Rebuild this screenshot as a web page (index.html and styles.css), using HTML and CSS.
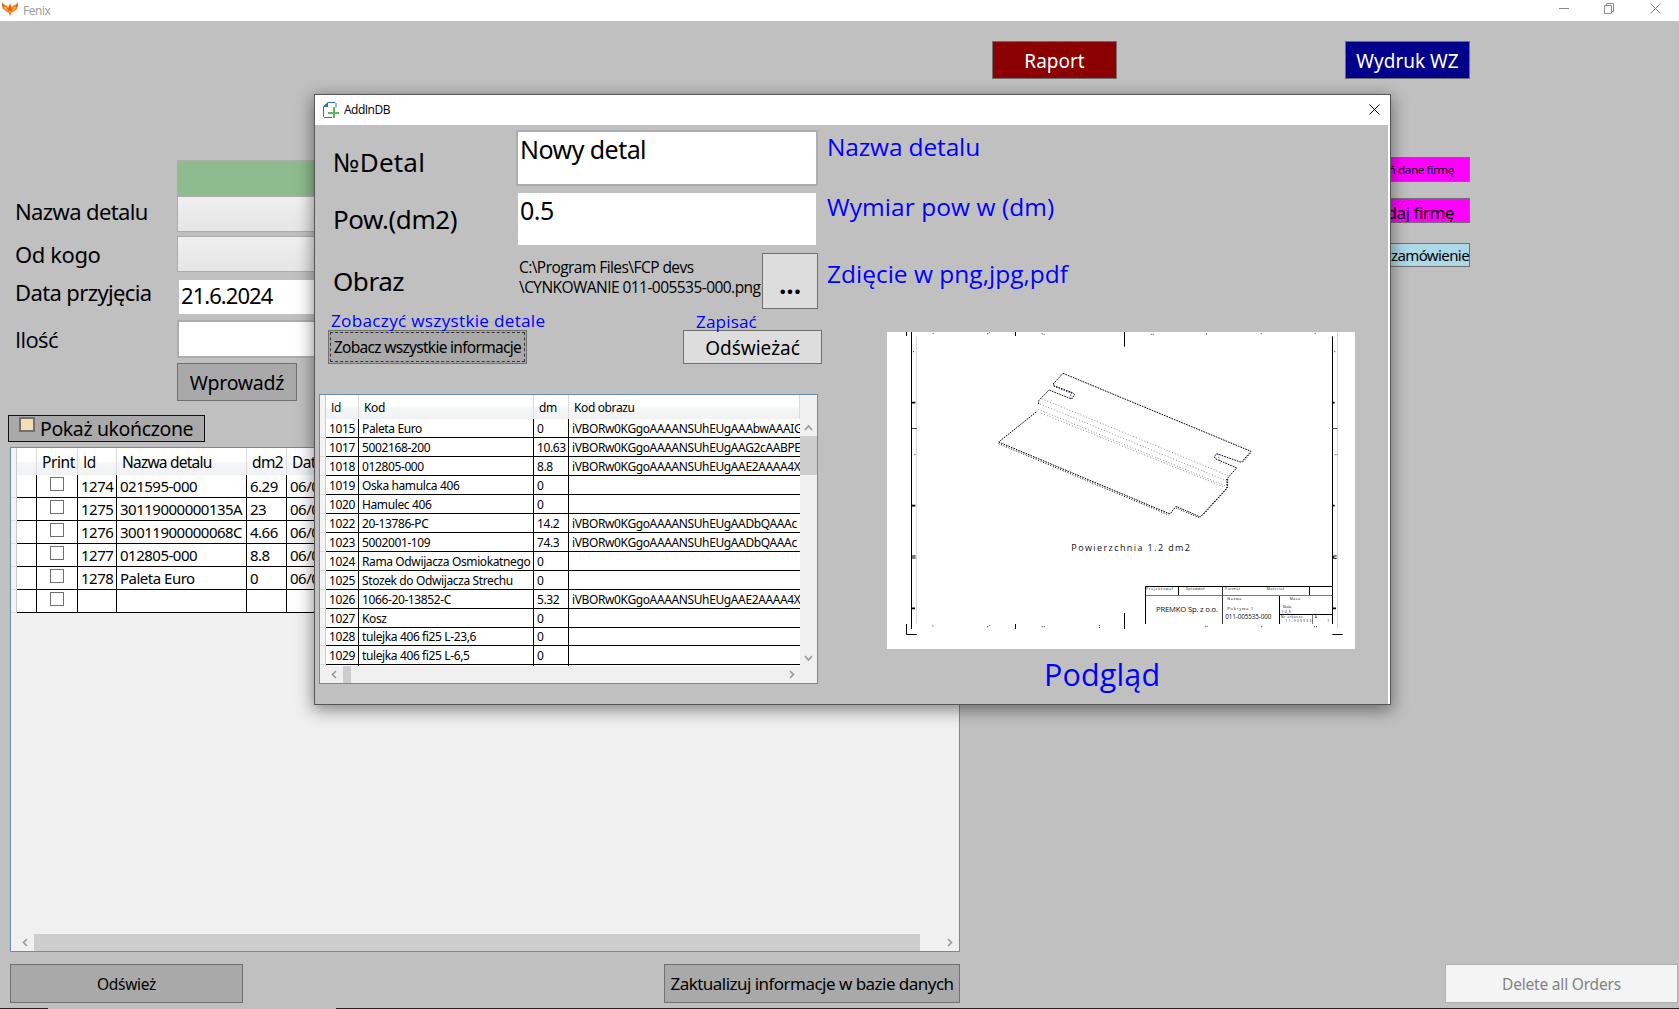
FILE: index.html
```html
<!DOCTYPE html>
<html lang="pl">
<head>
<meta charset="utf-8">
<title>Fenix</title>
<link rel="stylesheet" href="styles.css">
</head>
<body>
<div class="app">
  <header class="titlebar">
    <svg class="phoenix" width="16" height="14" viewBox="0 0 16 14"><path fill="#f58220" d="M0 0l1 1.500L3 3l2 .5L6.500 6V4L8 1.500 9.500 4v2L11 3.500l2-.5 2-1.500L16 0v4l-1 3-2 1.500-2 1.500-1.500.5L9 12l-1 2-1-2-.5-1.500L5 10 3 8.500 1 7 0 4z"/><path fill="#fbb034" d="M1 3l3 2 2 4-3-2zM15 3l-3 2-2 4 3-2zM7.300 9h1.400L8 12z"/><path fill="#e8502a" d="M7 4h2l.5 4L8 9 6.500 8zM0 1l3 3-2 1zM16 1l-3 3 2 1z"/></svg>
    <span class="app-name">Fenix</span>
    <div class="controls">
      <svg width="11" height="11" viewBox="0 0 11 11"><path d="M1 5.500h10"/></svg>
      <svg width="11" height="11" viewBox="0 0 11 11"><path d="M.5 2.500h7v8h-7zM2.500 2.500v-2h7v8h-2"/></svg>
      <svg width="11" height="11" viewBox="0 0 11 11"><path d="M.5.5l10 10M10.500.5l-10 10"/></svg>
    </div>
  </header>

  <div class="actions">
    <button class="btn report">Raport</button>
    <button class="btn wz">Wydruk WZ</button>
  </div>

  <div class="middle">
    <div class="left">
      <div class="row"><label></label><div class="field green"></div></div>
      <div class="row r-name"><label>Nazwa detalu</label><div class="field select"></div></div>
      <div class="row r-from"><label>Od kogo</label><div class="field select"></div></div>
      <div class="row r-date"><label>Data przyjęcia</label><div class="field date">21.6.2024</div></div>
      <div class="row r-qty"><label class="os">Ilość</label><div class="field qty"></div></div>
      <button class="btn enter">Wprowadź</button>
      <div class="finished"><span class="box"></span><span>Pokaż ukończone</span></div>

      <div class="orders">
        <div class="orders-body">
          <div class="o-row head"><i></i><b></b><b>Print</b><b class="os">Id</b><b>Nazwa detalu</b><b>dm2</b><b>Dat</b></div>
          <div class="o-row"><i></i><span></span><span><em></em></span><span>1274</span><span>021595-000</span><span>6.29</span><span>06/0</span></div>
          <div class="o-row"><i></i><span></span><span><em></em></span><span>1275</span><span>30119000000135A</span><span>23</span><span>06/0</span></div>
          <div class="o-row"><i></i><span></span><span><em></em></span><span>1276</span><span>30011900000068C</span><span>4.66</span><span>06/0</span></div>
          <div class="o-row"><i></i><span></span><span><em></em></span><span>1277</span><span>012805-000</span><span>8.8</span><span>06/0</span></div>
          <div class="o-row"><i></i><span></span><span><em></em></span><span>1278</span><span>Paleta Euro</span><span>0</span><span>06/0</span></div>
          <div class="o-row"><i></i><span></span><span><em></em></span><span></span><span></span><span></span><span></span></div>
        </div>
        <div class="hscroll big">
          <svg width="23" height="17" viewBox="0 0 23 17"><path d="M16 5l-3.500 3.500L16 12"/></svg>
          <div class="thumb"></div>
          <svg class="end" width="23" height="17" viewBox="0 0 23 17"><path d="M12 5l3.500 3.500L12 12"/></svg>
        </div>
      </div>
    </div>
    <div class="right">
      <button class="btn pink small">Zmień dane firmę</button>
      <button class="btn pink large">Dodaj firmę</button>
      <button class="btn sky">zamówienie</button>
    </div>
  </div>

  <div class="bottom">
    <button class="btn refresh">Odśwież</button>
    <button class="btn update">Zaktualizuj informacje w bazie danych</button>
    <button class="btn delete">Delete all Orders</button>
  </div>
  <div class="edge"><span></span></div>
</div>

<section class="dialog">
  <header class="dialog-title">
    <svg class="doc" width="17" height="17" viewBox="0 0 17 17"><path fill="none" stroke="#2f6fb5" d="M13 5.500V1.500L12 .5H5L.5 5v9.500l1 1H9"/><path fill="#2f6fb5" d="M5 0v5H0z"/><path fill="#5cb85c" d="M10 5h2v5h4v2h-4v4h-2v-4H5v-2h5z"/></svg>
    <span>AddInDB</span>
    <svg class="close" width="11" height="11" viewBox="0 0 11 11"><path d="M.5.5l10 10M10.500.5l-10 10"/></svg>
  </header>
  <div class="dialog-body">
    <div class="form">
      <div class="d-row d1"><label>№Detal</label><div class="input framed">Nowy detal</div></div>
      <div class="d-row d2"><label>Pow.(dm2)</label><div class="input">0.5</div></div>
      <div class="d-row d3"><label>Obraz</label><div class="path">C:\Program Files\FCP devs<br>\CYNKOWANIE 011-005535-000.png</div><button class="btn light dots">...</button></div>
      <div class="hints"><span>Zobaczyć wszystkie detale</span><span class="save">Zapisać</span></div>
      <div class="d-actions"><button class="btn showall"><span>Zobacz wszystkie informacje</span></button><button class="btn light reload">Odświeżać</button></div>
      <div class="parts">
        <div class="parts-view">
          <div class="p-row head"><i></i><b class="os">Id</b><b>Kod</b><b>dm</b><b>Kod obrazu</b></div>
          <div class="p-row"><i></i><span>1015</span><span>Paleta Euro</span><span>0</span><span>iVBORw0KGgoAAAANSUhEUgAAAbwAAAIG</span></div>
          <div class="p-row"><i></i><span>1017</span><span>5002168-200</span><span>10.63</span><span>iVBORw0KGgoAAAANSUhEUgAAG2cAABPE</span></div>
          <div class="p-row"><i></i><span>1018</span><span>012805-000</span><span>8.8</span><span>iVBORw0KGgoAAAANSUhEUgAAE2AAAA4X</span></div>
          <div class="p-row"><i></i><span>1019</span><span>Oska hamulca 406</span><span>0</span><span></span></div>
          <div class="p-row"><i></i><span>1020</span><span>Hamulec 406</span><span>0</span><span></span></div>
          <div class="p-row"><i></i><span>1022</span><span>20-13786-PC</span><span>14.2</span><span>iVBORw0KGgoAAAANSUhEUgAADbQAAAc</span></div>
          <div class="p-row"><i></i><span>1023</span><span>5002001-109</span><span>74.3</span><span>iVBORw0KGgoAAAANSUhEUgAADbQAAAc</span></div>
          <div class="p-row"><i></i><span>1024</span><span>Rama Odwijacza Osmiokatnego</span><span>0</span><span></span></div>
          <div class="p-row"><i></i><span>1025</span><span>Stozek do Odwijacza Strechu</span><span>0</span><span></span></div>
          <div class="p-row"><i></i><span>1026</span><span>1066-20-13852-C</span><span>5.32</span><span>iVBORw0KGgoAAAANSUhEUgAAE2AAAA4X</span></div>
          <div class="p-row"><i></i><span>1027</span><span>Kosz</span><span>0</span><span></span></div>
          <div class="p-row short"><i></i><span>1028</span><span>tulejka 406 fi25 L-23,6</span><span>0</span><span></span></div>
          <div class="p-row"><i></i><span>1029</span><span>tulejka 406 fi25 L-6,5</span><span>0</span><span></span></div>
          <div class="p-row"><i></i><span></span><span></span><span></span><span></span></div>
        </div>
        <div class="vscroll">
          <svg width="17" height="17" viewBox="0 0 17 17"><path d="M5 11l3.500-4L12 11"/></svg>
          <div class="thumb"></div>
          <svg class="down" width="17" height="17" viewBox="0 0 17 17"><path d="M5 7l3.500 4L12 7"/></svg>
        </div>
        <div class="hscroll">
          <svg width="23" height="17" viewBox="0 0 23 17"><path d="M16 5l-3.500 3.500L16 12"/></svg>
          <div class="thumb"></div>
          <svg class="end" width="17" height="17" viewBox="0 0 17 17"><path d="M7 5l3.500 3.500L7 12"/></svg>
        </div>
      </div>
    </div>
    <div class="side">
      <h2>Nazwa detalu</h2>
      <h2 class="h-b">Wymiar pow w (dm)</h2>
      <h2 class="h-c">Zdięcie w png,jpg,pdf</h2>
      <svg class="preview" width="468" height="317" viewBox="21 24 1404 951" fill="none" stroke="#000" stroke-width="3">
        <path stroke="#d8d8d8" d="M109.500 37v863M1372.500 24v890"/>
        <path d="M94.500 24v891M1357.500 37v863M79.500 24v12M79.500 900v31.500h31M1357 931.500h31M406.500 24v12M406.500 900v15M733.500 24v44M733.500 867v48"/>
        <path stroke="#444" d="M96 313.500h15M1357 313.500h15"/>
        <path stroke-width="5" d="M96 236h10M96 545h10M96 853h9M1358 236h6M1358 545h6M1358 853h10"/>
        <path d="M96 696h11M96 702h11M1370 696h-10v7h10"/>
        <path stroke="#333" stroke-dasharray="3 3" d="M158 28h5M321 30l8-4M485 29l9 2M812 31h9M978 30h6M1142 29h6M1304 28h6M157 906h6M321 909l8-5M485 908h9M658 903v9M976 907h8M1143 909l6-4M1302 908h9M99 83h6M103 392h4M1363 83h6M1364 392h8"/>
        <g stroke-dasharray="5 3">
          <path d="M549 148L1113 382L1084 415L1010 389L1003 398L1006 404L1070 432L1043 462V490L961 579L888 547L870 570L356 354L470 263M549 148L521 178V185L577 206L584 212L575 225L507 198L476 230V240"/>
          <path stroke-dasharray="3 5" d="M521 186L575 208M356 359L866 573M888 552L958 581M1040 465V495L968 575M1111 388L1085 418"/>
        </g>
        <path stroke="#777" stroke-width="2.500" stroke-dasharray="3 6" d="M485 224L1045 455M480 240L1043 472M474 256L1040 487M484 268L1030 488"/>
        <path stroke="#22f" stroke-dasharray="3 6" d="M570 203l4 24M1014 390l7 28"/>
        <path d="M796.500 900V787.500H1357M895.500 787v27M1288.500 787v27M1198.500 815v85M1198 871.500h159"/>
        <path stroke="#777" d="M797 814.500h560M1297.500 872v28"/><path stroke="#333" d="M1027.500 788v112"/>
        <g class="plan" fill="#111" stroke="none">
          <text x="574" y="682" font-size="27" textLength="356">Powierzchnia 1.2 dm2</text>
          <text x="828" y="864" font-size="23" textLength="186">PREMKO Sp. z o.o.</text>
          <text x="1036" y="885" font-size="19" textLength="138">011-005535-000</text>
          <text x="1042" y="858" font-size="13" textLength="78">Pokrywa 1</text>
          <text x="1042" y="829" font-size="11" textLength="42">Nazwa</text>
          <text x="1229" y="829" font-size="11" textLength="31">Masa</text>
          <text x="798" y="798" font-size="11" textLength="80">Projektował</text>
          <text x="918" y="798" font-size="11" textLength="55">Sprawdził</text>
          <text x="1036" y="798" font-size="11" textLength="44">Format</text>
          <text x="1160" y="798" font-size="11" textLength="52">Materiał</text>
          <text x="1208" y="852" font-size="11" textLength="26">Skala</text>
          <text x="1203" y="866" font-size="12" textLength="30">1:2,5</text>
          <text x="1203" y="881" font-size="10" textLength="64">Nr arkusza</text>
          <text x="1216" y="895" font-size="10" textLength="78">11-005535</text>
          <text x="1304" y="881" font-size="10">A</text><text x="1341" y="894" font-size="12">1</text>
        </g>
      </svg>
      <h1>Podgląd</h1>
    </div>
  </div>
</section>
</body>
</html>
```
FILE: styles.css
```css
* { box-sizing: border-box; }
body { margin: 0; width: 1679px; height: 1009px; overflow: hidden; background: #c0c0c0; color: #000; font-family: "Noto Sans", "Open Sans", sans-serif; }
.os { font-family: "Open Sans", sans-serif; }
.app { display: flex; flex-direction: column; height: 1009px; }
svg { display: block; flex: none; }

.titlebar { height: 21px; background: #fff; display: flex; align-items: flex-start; padding: 2px 18px 0 2px; }
.app-name { font: 12px/17px "Open Sans", sans-serif; letter-spacing: -.45px; color: #999; margin-left: 5px; }
.controls { margin-left: auto; display: flex; gap: 35px; padding-top: 1px; }
.controls svg { fill: none; stroke: #8a8a8a; }

.btn { border: 1px solid #707070; background: #a9a9a9; color: #000; padding: 0; border-radius: 0; font-family: inherit; white-space: nowrap; flex: none; overflow: hidden; }
.light { background: #ddd; }

.actions { display: flex; gap: 228px; margin: 20px 0 0 992px; height: 38px; }
.actions .btn { width: 125px; color: #fff; font-size: 19px; padding-top: 2px; }
.report { background: #8b0000; }
.wz { background: #00008b; }

.middle { display: flex; margin-top: 78px; height: 795px; }
.left { width: 960px; padding-top: 3px; display: flex; flex-direction: column; }
.row { display: grid; grid-template-columns: 177px 300px; height: 36px; font-size: 22px; line-height: 24px; flex: none; }
.row label { padding-left: 15px; letter-spacing: -.62px; display: flex; align-items: center; }
.r-name label { padding-bottom: 6px; }
.r-from { margin-top: 4px; }
.r-from label { letter-spacing: -.4px; padding-bottom: 1px; }
.r-date { margin-top: 8px; height: 34px; }
.r-date label { padding-bottom: 10px; }
.r-qty { margin-top: 6px; height: 38px; }
.field { border: 1px solid #acacac; }
.green { background: #8fbc8f; }
.select { background: linear-gradient(#f0f0f0, #e5e5e5); }
.date { background: #fff; border: 0; margin-left: 2px; display: flex; align-items: center; padding: 0 0 5px 2px; letter-spacing: -.95px; }
.qty { background: #fff; border: 2px solid #abadb3; }
.enter { margin: 5px 0 0 177px; width: 120px; height: 38px; font-size: 19.500px; letter-spacing: -.25px; }
.finished { margin: 14px 0 0 8px; width: 197px; height: 27px; border: 1px solid #111; background: #a9a9a9; display: flex; font-size: 19.500px; line-height: 25px; letter-spacing: -.38px; padding-left: 10px; flex: none; }
.box { width: 16px; height: 15px; margin: 1px 5px 0 0; border: 2px solid #707070; background: #f5deb3; }

.orders { margin: 5px 0 0 10px; width: 950px; height: 505px; border: 1px solid #688caf; background: #f0f0f0; display: flex; flex-direction: column; flex: none; }
.orders-body { flex: 1; }
.o-row { display: grid; grid-template-columns: 6px 20px 41px 39px 130px 40px 60px; height: 23px; font-size: 15px; line-height: 22px; letter-spacing: -.5px; white-space: nowrap; }
.o-row span { background: #fff; border: solid #000; border-width: 0 1px 1px 0; padding-left: 3px; }
.o-row i, .p-row i { background: #f4f4f4; border-bottom: 1px solid #ddd; border-right: 1px solid #ccc; }
.o-row em { display: block; width: 14px; height: 14px; margin: 2px 0 0 10px; border: 1px solid #707070; background: #fff; }
.head b { font-weight: 400; background: linear-gradient(#fff 45%, #f4f5f6 55%, #f1f2f4); border: solid #dcdcdc; border-width: 0 1px 1px 0; padding-left: 5px; }
.o-row.head { height: 27px; font-size: 15.500px; line-height: 28px; letter-spacing: -.6px; }
.o-row.head b:nth-child(3) { letter-spacing: -.4px; }
.o-row.head b:nth-child(5) { letter-spacing: -.78px; }

.hscroll { display: flex; height: 17px; background: #f0f0f0; flex: none; }
.hscroll svg, .vscroll svg { fill: none; stroke: #999; stroke-width: 1.600; }
.thumb { background: #cdcdcd; }
.big .thumb { width: 886px; }

.right { margin-left: 385px; display: flex; flex-direction: column; }
.right .btn { width: 125px; display: flex; justify-content: flex-end; align-items: center; padding-right: 15px; }
.pink { background: #f0f; height: 25px; }
.small { font-size: 11.500px; letter-spacing: -.3px; }
.right .large { margin-top: 16px; font-size: 17px; letter-spacing: -.45px; padding-top: 3px; }
.right .sky { margin-top: 20px; height: 24px; background: #add8e6; font-size: 15px; letter-spacing: -.6px; padding-right: 0; }

.bottom { display: flex; margin: 12px 1px 0 10px; height: 39px; }
.refresh { width: 233px; font-size: 15.500px; letter-spacing: -.3px; }
.update { width: 296px; margin-left: 421px; font-size: 17px; letter-spacing: -.53px; }
.delete { width: 233px; margin-left: auto; font-size: 15.500px; letter-spacing: -.2px; background: #f4f4f4; border-color: #adb2b5; color: #838383; }
.edge { margin-top: 5px; height: 1px; background: #222; padding-left: 48px; }
.edge span { display: block; width: 288px; height: 1px; background: #c0c0c0; }

.dialog { position: absolute; left: 314px; top: 94px; width: 1077px; height: 611px; border: 1px solid #555; background: #fff; box-shadow: 0 4px 16px 1px rgba(0, 0, 0, .45); }
.dialog-title { height: 30px; display: flex; align-items: center; padding: 0 9px 0 8px; font: 12px/16px "Open Sans", sans-serif; letter-spacing: -.5px; }
.dialog-title span { margin-left: 4px; }
.close { margin: 0 1px 2px auto; fill: none; stroke: #000; }
.dialog-body { width: 1073px; height: 579px; background: #c0c0c0; display: flex; }
.form { width: 509px; padding-top: 5px; flex: none; }
.d-row { display: grid; grid-template-columns: 201px 302px; }
.d-row label { font-size: 26px; letter-spacing: -.45px; padding-left: 18px; display: flex; align-items: center; }
.d1 { height: 56px; }
.d1 label { padding-top: 8px; letter-spacing: .2px; }
.d2 { margin-top: 7px; height: 52px; }
.d3 { margin-top: 8px; height: 56px; grid-template-columns: 201px 246px 56px; }
.input { background: #fff; font-size: 25px; line-height: 34px; letter-spacing: -.55px; padding-left: 2px; margin: 0 2px; }
.input.framed { border: 2px solid #abadb3; margin: 0; }
.path { font: 15.500px/20px "Open Sans", sans-serif; letter-spacing: -.55px; padding: 4px 0 0 3px; white-space: nowrap; }
.dots { font: bold 26px/30px "Open Sans", sans-serif; padding-top: 6px; }
.hints { height: 21px; display: flex; padding-left: 16px; font: 17.200px/23px "Open Sans", sans-serif; letter-spacing: .27px; color: #00f; position: relative; z-index: 1; }
.hints span { width: 365px; flex: none; white-space: nowrap; }
.hints .save { width: auto; padding-top: 1px; letter-spacing: .1px; }
.d-actions { display: flex; gap: 156px; height: 34px; padding-left: 13px; }
.showall { width: 199px; padding: 1px; font-size: 15.500px; letter-spacing: -.7px; }
.showall span { display: flex; align-items: center; justify-content: center; height: 30px; border: 1px dashed #333; }
.reload { width: 139px; font-size: 19px; padding-top: 1px; }

.parts { margin: 30px 0 0 4px; width: 499px; height: 290px; border: 1px solid #688caf; background: #f0f0f0; display: grid; grid-template: 271px 17px / 480px 17px; }
.parts-view { overflow: hidden; }
.p-row { display: grid; grid-template-columns: 6px 33px 175px 35px 231px; height: 19px; font-size: 12px; line-height: 19px; letter-spacing: -.38px; white-space: nowrap; }
.p-row span { background: #fff; border: solid #000; border-width: 0 1px 1px 0; padding-left: 3px; overflow: hidden; }
.p-row span:last-child { border-right: 0; }
.p-row.short { height: 18px; line-height: 17px; }
.p-row.head { height: 24px; line-height: 25px; }
.vscroll { display: flex; flex-direction: column; background: #f0f0f0; padding-top: 24px; }
.vscroll .thumb { height: 39px; }
.vscroll .down { margin-top: auto; }
.hscroll .end { margin-left: auto; }
.parts .hscroll .thumb { width: 8px; }

.side { width: 564px; padding-top: 5px; }
h1, h2 { margin: 0; font: 24.500px/34px "Open Sans", sans-serif; color: #00f; white-space: nowrap; padding-left: 3px; }
h2:first-child { letter-spacing: -.15px; }
.h-b { margin-top: 26px; letter-spacing: .06px; }
.h-c { margin-top: 33px; letter-spacing: 0; }
.preview { background: #fff; margin: 41px 0 0 63px; }
.plan { font-family: "Open Sans", sans-serif; }
h1 { font-size: 30.500px; line-height: 50px; padding-left: 220px; letter-spacing: .15px; }
```
